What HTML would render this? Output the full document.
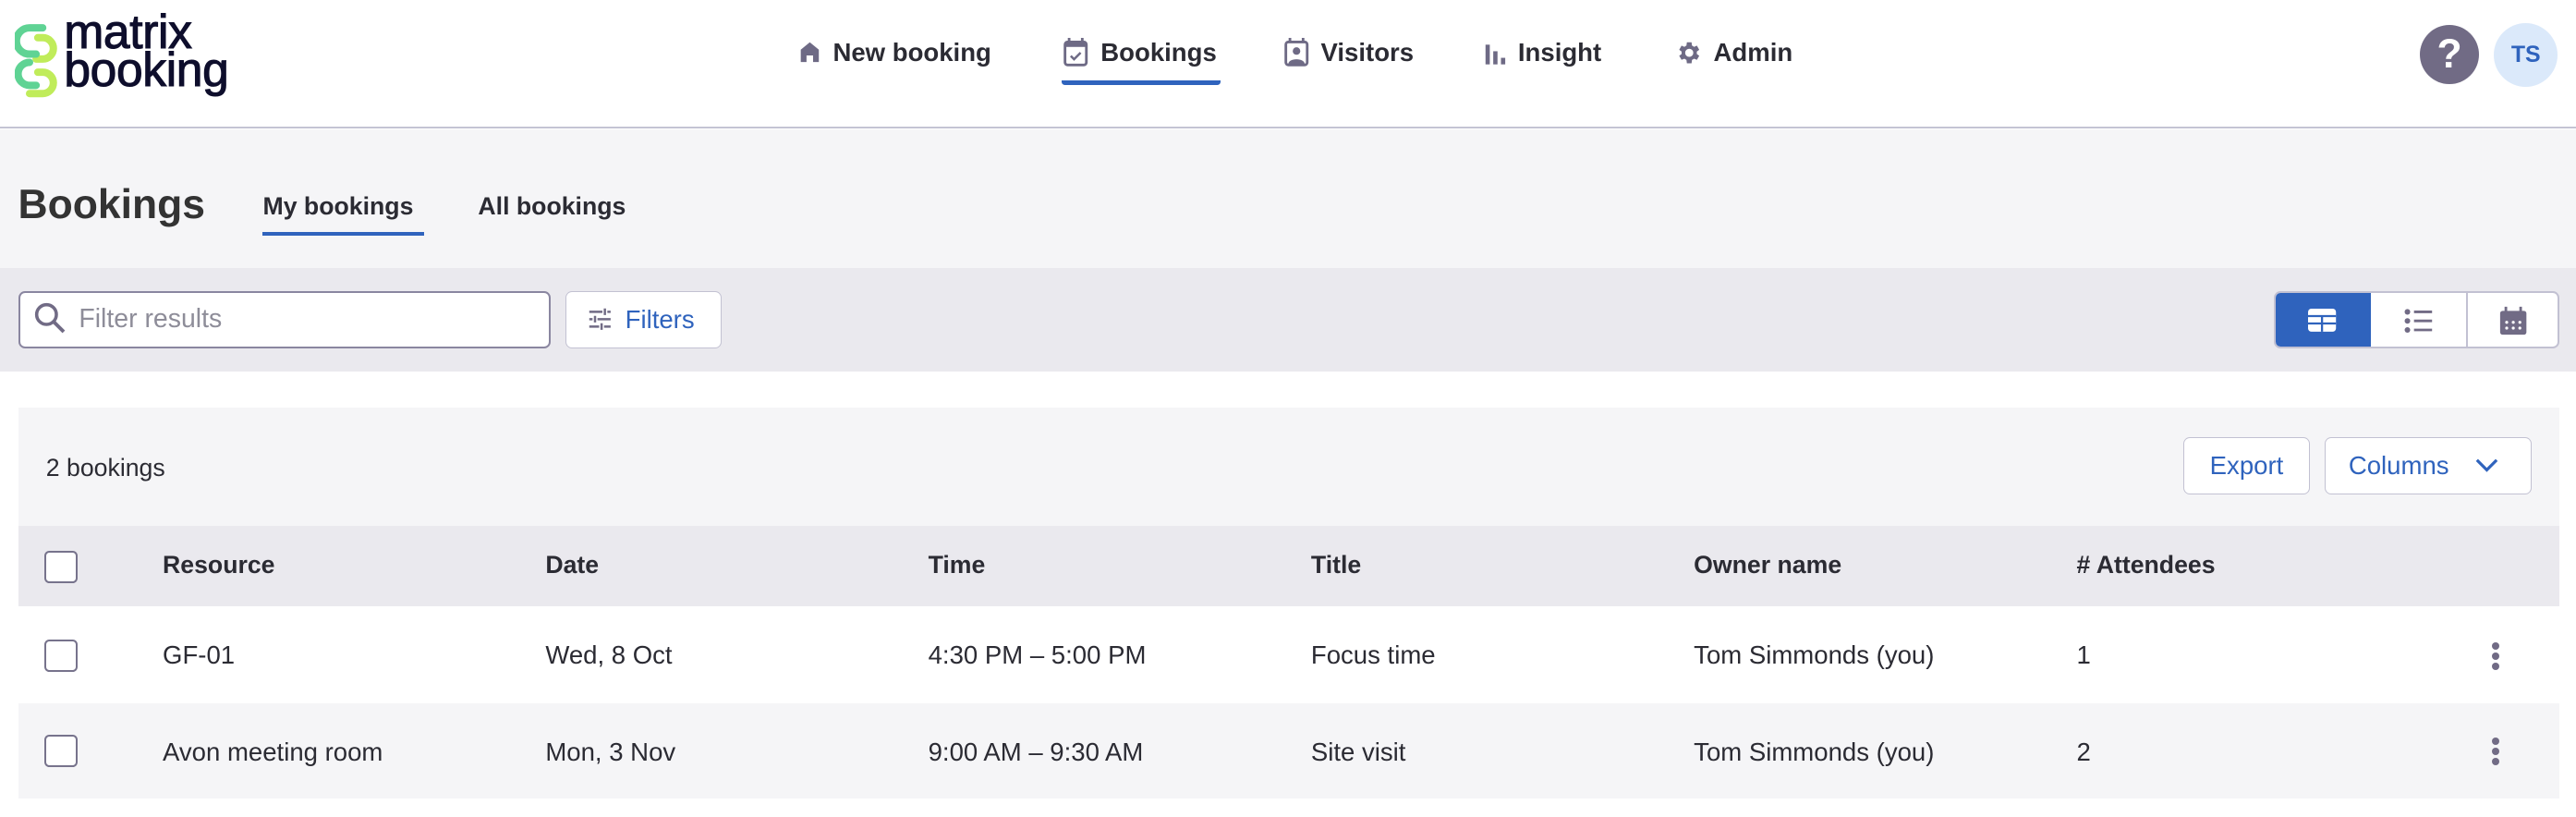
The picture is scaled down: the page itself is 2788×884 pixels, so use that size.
<!DOCTYPE html>
<html><head><meta charset="utf-8"><style>
*{box-sizing:border-box;margin:0;padding:0}
html,body{width:2788px;height:884px;overflow:hidden;background:#fff}
#r{zoom:1.77806;width:1568px;height:497px;position:relative;font-family:"Liberation Sans",sans-serif;color:#2b2b33}
.a{position:absolute}
.nav{font-size:15.5px;font-weight:bold;color:#2b2b33;top:23px;display:flex;align-items:center;gap:7px;white-space:nowrap}
.btn{position:absolute;background:#fff;border:1px solid #c2c1d2;border-radius:4px;color:#2f63bd;font-size:15.5px;display:flex;align-items:center}
.th{position:absolute;top:335px;font-size:15px;font-weight:bold}
.td{position:absolute;font-size:15.5px}
.cb{position:absolute;left:27px;width:20px;height:20px;border:1.5px solid #77738c;border-radius:3px;background:#fff}
.keb{position:absolute;left:1517px;width:6px}
.keb i{display:block;width:4.5px;height:4.5px;border-radius:50%;background:#716b85;margin:0 0 1.6px 0}
</style></head><body><div id="r">
<!-- header -->
<div class="a" style="left:0;top:0;width:1568px;height:78px;background:#fff;border-bottom:1.5px solid #c4c4d4"></div>
<svg class="a" style="left:9px;top:13px" width="26" height="48" viewBox="0 0 26 48">
<path d="M13 23h4a6.5 6.5 0 0 0 0-13h-3M9 44h8a6.5 6.5 0 0 0 0-13h-3" fill="none" stroke="#c0ec5a" stroke-width="4.5" stroke-linecap="round"/>
<path d="M17 4H9a8 8 0 0 0 0 16h4M9 25a7 7 0 0 0 0 14h4" fill="none" stroke="#5fd394" stroke-width="4.5" stroke-linecap="round"/>
</svg>
<div class="a" style="left:39px;top:8px;font-size:29px;line-height:23px;font-weight:normal;color:#0e0e2c;letter-spacing:-0.2px;-webkit-text-stroke:0.6px #0e0e2c">matrix<br>booking</div>

<div class="a nav" style="left:486px"><svg width="14" height="14" viewBox="0 0 14 14"><path d="M7 1L1.5 5.5V13H5V9h4v4h3.5V5.5z" fill="#6e6a85"/></svg>New booking</div>
<div class="a nav" style="left:647px"><svg width="16" height="18" viewBox="0 0 16 18"><rect x="1.5" y="2.5" width="13" height="14" rx="1.5" fill="none" stroke="#6e6a85" stroke-width="1.6"/><rect x="1.5" y="2.5" width="13" height="3" fill="#6e6a85"/><path d="M4 0v3M12 0v3" stroke="#6e6a85" stroke-width="1.6"/><path d="M5 11l2 2 4-4" fill="none" stroke="#6e6a85" stroke-width="1.4"/></svg>Bookings</div>
<div class="a" style="left:646px;top:49px;width:97px;height:3px;background:#2f63bd;border-radius:0 0 2px 2px"></div>
<div class="a nav" style="left:781px"><svg width="16" height="18" viewBox="0 0 16 18"><rect x="1.5" y="2.5" width="13" height="14" rx="1.5" fill="none" stroke="#6e6a85" stroke-width="1.6"/><path d="M4 0v3M12 0v3" stroke="#6e6a85" stroke-width="1.6"/><circle cx="8" cy="8" r="2.3" fill="#6e6a85"/><path d="M3 16c0-4 10-4 10 0z" fill="#6e6a85"/></svg>Visitors</div>
<div class="a nav" style="left:903px"><svg width="14" height="16" viewBox="0 0 14 16"><rect x="1" y="3" width="2.6" height="12" fill="#6e6a85"/><rect x="5.7" y="7" width="2.6" height="8" fill="#6e6a85"/><rect x="10.4" y="11" width="2.6" height="4" fill="#6e6a85"/></svg>Insight</div>
<div class="a nav" style="left:1019px"><svg width="17" height="17" viewBox="0 0 24 24"><path fill="#6e6a85" d="M19.4 13a7.5 7.5 0 0 0 0-2l2.1-1.6-2-3.5-2.5 1a7.6 7.6 0 0 0-1.7-1L14.9 3h-4l-.4 2.9a7.6 7.6 0 0 0-1.7 1l-2.5-1-2 3.5L6.4 11a7.5 7.5 0 0 0 0 2l-2.1 1.6 2 3.5 2.5-1a7.6 7.6 0 0 0 1.7 1l.4 2.9h4l.4-2.9a7.6 7.6 0 0 0 1.7-1l2.5 1 2-3.5zM12.9 15.5a3.5 3.5 0 1 1 0-7 3.5 3.5 0 0 1 0 7z"/></svg>Admin</div>

<div class="a" style="left:1473px;top:15px;width:36px;height:36px;border-radius:50%;background:#716b85;color:#fff;font-size:25px;font-weight:bold;text-align:center;line-height:36px">?</div>
<div class="a" style="left:1518px;top:14px;width:39px;height:39px;border-radius:50%;background:#dbe9fa;color:#2f63bd;font-size:14px;font-weight:bold;text-align:center;line-height:39px">TS</div>

<!-- subheader -->
<div class="a" style="left:0;top:79px;width:1568px;height:84px;background:#f5f5f7"></div>
<div class="a" style="left:11px;top:111px;font-size:25px;font-weight:bold;color:#333">Bookings</div>
<div class="a" style="left:160px;top:117px;font-size:15px;font-weight:bold">My bookings</div>
<div class="a" style="left:160px;top:141px;width:98px;height:2.5px;background:#2f63bd"></div>
<div class="a" style="left:291px;top:117px;font-size:15px;font-weight:bold">All bookings</div>

<!-- toolbar -->
<div class="a" style="left:0;top:163px;width:1568px;height:63px;background:#eae9ee"></div>
<div class="a" style="left:11px;top:177px;width:324px;height:35px;background:#fff;border:1.2px solid #8a86a0;border-radius:4px"></div>
<svg class="a" style="left:21px;top:184px" width="20" height="20" viewBox="0 0 20 20"><circle cx="7.5" cy="7.5" r="6" fill="none" stroke="#716b85" stroke-width="2"/><path d="M12 12l6 6" stroke="#716b85" stroke-width="2.2"/></svg>
<div class="a" style="left:48px;top:185px;font-size:16px;color:#8e8d99">Filter results</div>
<div class="btn" style="left:344px;top:177px;width:95px;height:35px"><svg style="margin:0 8px 0 13px" width="15" height="15" viewBox="0 0 15 15"><path d="M1 3h8M12 3h2M1 7.5h2M6 7.5h8M1 12h6M10 12h4M10.5 1v4M4.5 5.5v4M8.5 10v4" stroke="#716b85" stroke-width="1.4"/></svg>Filters</div>

<div class="a" style="left:1384px;top:177px;width:174px;height:35px;background:#fff;border:1.2px solid #c2c1d2;border-radius:4px;overflow:hidden">
<div class="a" style="left:0;top:0;width:58px;height:35px;background:#2f63bd"></div>
<div class="a" style="left:116px;top:0;width:1.2px;height:35px;background:#c2c1d2"></div>
<svg class="a" style="left:20px;top:10px" width="17" height="14" viewBox="0 0 17 14"><rect x="0" y="0" width="17" height="14" rx="2" fill="#fff"/><path d="M0 4.5h17M0 9h17M8.5 4.5V14" stroke="#2f63bd" stroke-width="1.3"/></svg>
<svg class="a" style="left:78px;top:9px" width="18" height="16" viewBox="0 0 18 16"><circle cx="2" cy="2.5" r="1.7" fill="#716b85"/><circle cx="2" cy="8" r="1.7" fill="#716b85"/><circle cx="2" cy="13.5" r="1.7" fill="#716b85"/><path d="M6 2.5h11M6 8h11M6 13.5h11" stroke="#716b85" stroke-width="1.6"/></svg>
<svg class="a" style="left:136px;top:8px" width="17" height="18" viewBox="0 0 17 18"><rect x="0.5" y="3" width="16" height="14.5" rx="1.5" fill="#716b85"/><path d="M4 0.5v4M13 0.5v4" stroke="#716b85" stroke-width="1.6"/><g fill="#fff"><circle cx="4.5" cy="10" r=".9"/><circle cx="8.5" cy="10" r=".9"/><circle cx="12.5" cy="10" r=".9"/><circle cx="4.5" cy="13.5" r=".9"/><circle cx="8.5" cy="13.5" r=".9"/><circle cx="12.5" cy="13.5" r=".9"/></g></svg>
</div>

<!-- card -->
<div class="a" style="left:11px;top:248px;width:1547px;height:72px;background:#f5f5f7"></div>
<div class="a" style="left:28px;top:276px;font-size:15px">2 bookings</div>
<div class="btn" style="left:1329px;top:266px;width:77px;height:35px;justify-content:center">Export</div>
<div class="btn" style="left:1415px;top:266px;width:126px;height:35px;padding-left:14px">Columns<svg style="margin-left:16px" width="14" height="9" viewBox="0 0 14 9"><path d="M1 1l6 6 6-6" fill="none" stroke="#2f63bd" stroke-width="1.8"/></svg></div>

<div class="a" style="left:11px;top:320px;width:1547px;height:49px;background:#eae9ee"></div>
<div class="cb" style="top:335px"></div>
<div class="th" style="left:99px">Resource</div>
<div class="th" style="left:332px">Date</div>
<div class="th" style="left:565px">Time</div>
<div class="th" style="left:798px">Title</div>
<div class="th" style="left:1031px">Owner name</div>
<div class="th" style="left:1264px"># Attendees</div>

<div class="a" style="left:11px;top:369px;width:1547px;height:59px;background:#fff"></div>
<div class="cb" style="top:389px"></div>
<div class="td" style="left:99px;top:390px">GF-01</div>
<div class="td" style="left:332px;top:390px">Wed, 8 Oct</div>
<div class="td" style="left:565px;top:390px">4:30 PM – 5:00 PM</div>
<div class="td" style="left:798px;top:390px">Focus time</div>
<div class="td" style="left:1031px;top:390px">Tom Simmonds (you)</div>
<div class="td" style="left:1264px;top:390px">1</div>
<div class="keb" style="top:391px"><i></i><i></i><i></i></div>

<div class="a" style="left:11px;top:428px;width:1547px;height:58px;background:#f5f5f7"></div>
<div class="cb" style="top:447px"></div>
<div class="td" style="left:99px;top:449px">Avon meeting room</div>
<div class="td" style="left:332px;top:449px">Mon, 3 Nov</div>
<div class="td" style="left:565px;top:449px">9:00 AM – 9:30 AM</div>
<div class="td" style="left:798px;top:449px">Site visit</div>
<div class="td" style="left:1031px;top:449px">Tom Simmonds (you)</div>
<div class="td" style="left:1264px;top:449px">2</div>
<div class="keb" style="top:449px"><i></i><i></i><i></i></div>
</div></body></html>
